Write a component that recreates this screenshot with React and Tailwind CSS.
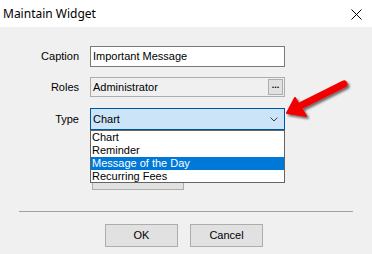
import React from 'react';

export default function App() {
    const items = ['Chart', 'Reminder', 'Message of the Day', 'Recurring Fees'];
    return (
        <div className="relative w-[372px] h-[254px] bg-[#f0f0f0] overflow-hidden text-[11px] text-black" style={{ fontFamily: '"Liberation Sans", Arial, sans-serif' }}>
            {/* title bar */}
            <div className="h-[27px] bg-white flex items-center justify-between pl-[3px] pr-[10px]">
                <span className="text-[12px] text-black" style={{ fontFamily: '"Noto Sans", "Open Sans", sans-serif' }}>Maintain Widget</span>
                <svg width="11" height="11" viewBox="0 0 11 11" className="mt-[1px]">
                    <path d="M0.5 0.5 L10.5 10.5 M10.5 0.5 L0.5 10.5" stroke="#000" strokeWidth="1" />
                </svg>
            </div>

            <div className="relative pt-[19px]">
                {/* caption */}
                <div className="flex items-center h-[21px]">
                    <div className="w-[80px] text-right pr-[1px]">Caption</div>
                    <div className="ml-[10px] w-[195px] h-[21px] bg-white border border-[#7a7a7a] flex items-center pl-[2px]">Important Message</div>
                </div>

                {/* roles */}
                <div className="flex items-center h-[20px] mt-[10px]">
                    <div className="w-[80px] text-right pr-[1px]">Roles</div>
                    <div className="ml-[10px] w-[195px] h-[20px] bg-[#f0f0f0] border border-[#adadad] flex items-center justify-between pl-[2px] pr-[1px]">
                        <span>Administrator</span>
                        <div className="w-[15px] h-[16px] bg-[#e1e1e1] border border-[#adadad] flex items-center justify-center pb-[3px] font-bold text-[9px] leading-none">...</div>
                    </div>
                </div>

                {/* type */}
                <div className="flex items-center h-[22px] mt-[11px]">
                    <div className="w-[80px] text-right pr-[1px]">Type</div>
                    <div className="ml-[10px] w-[195px] h-[22px] bg-[#cce4f7] border border-[#005499] flex items-center justify-between pl-[2px] pr-[6px]">
                        <span>Chart</span>
                        <svg width="8" height="5" viewBox="0 0 8 5">
                            <path d="M0.5 0.5 L4 4 L7.5 0.5" stroke="#404040" fill="none" strokeWidth="1" />
                        </svg>
                    </div>
                </div>

                {/* hidden button behind list */}
                <div className="ml-[92px] mt-[37px] w-[92px] h-[23px] bg-[#e1e1e1] border border-[#adadad]" />

                {/* dropdown list */}
                <div className="absolute left-[90px] top-[103px] w-[195px] h-[53px] bg-white border border-[#646464] flex flex-col">
                    {items.map((it) => (
                        <div
                            key={it}
                            className={
                                'h-[13px] leading-[13px] pl-[1px] ' +
                                (it === 'Message of the Day' ? 'bg-[#0078d7] text-white' : '')
                            }
                        >
                            {it}
                        </div>
                    ))}
                </div>
            </div>

            {/* separator */}
            <div className="mx-[19px] mt-[21px] h-px bg-[#a0a0a0]" />

            {/* buttons */}
            <div className="flex justify-center gap-[12px] mt-[12px] pr-[4px]">
                <button className="w-[73px] h-[23px] bg-[#e1e1e1] border border-[#adadad] text-[11px]">OK</button>
                <button className="w-[73px] h-[23px] bg-[#e1e1e1] border border-[#adadad] text-[11px]">Cancel</button>
            </div>

            {/* red arrow */}
            <svg className="absolute left-[280px] top-[78px]" width="72" height="50" viewBox="0 0 72 50">
                <defs>
                    <filter id="sh" x="-20%" y="-20%" width="140%" height="140%">
                        <feDropShadow dx="2" dy="2" stdDeviation="1.2" floodColor="#000" floodOpacity="0.55" />
                    </filter>
                </defs>
                <g filter="url(#sh)">
                    <path d="M64 6 L22 27" stroke="#f20000" strokeWidth="7" strokeLinecap="round" />
                    <path d="M7 35 L15 20 L26 38 Z" fill="#f20000" stroke="#f20000" strokeWidth="2" strokeLinejoin="round" />
                </g>
            </svg>
        </div>
    );
}
